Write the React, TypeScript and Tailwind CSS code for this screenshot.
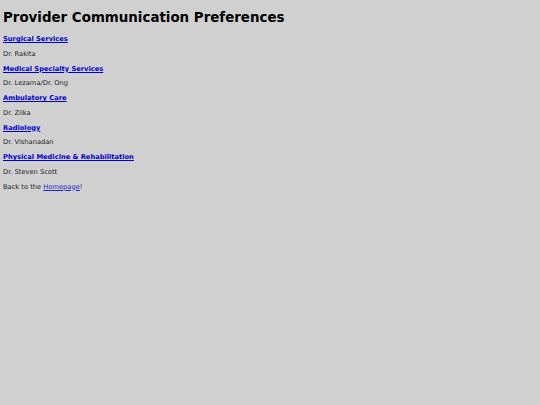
const sections = [
  { name: 'Surgical Services', doc: 'Dr. Rakita' },
  { name: 'Medical Specialty Services', doc: 'Dr. Lezama/Dr. Ong' },
  { name: 'Ambulatory Care', doc: 'Dr. Zilka' },
  { name: 'Radiology', doc: 'Dr. Vishanadan' },
  { name: 'Physical Medicine & Rehabilitation', doc: 'Dr. Steven Scott' },
];

export default function App() {
  return (
    <div className="min-h-[405px] bg-[#d0d0d0] px-[3px] pt-[9px] text-black" style={{ fontFamily: '"DejaVu Sans", Verdana, sans-serif' }}>
      <h1 className="text-[13.4px] font-bold leading-[18px]">Provider Communication Preferences</h1>
      <div className="mt-[5px] flex flex-col text-[6.7px] leading-[14.75px]">
        {sections.map((s) => (
          <div key={s.name} className="contents">
            <a href="#" className="font-bold text-[#0000cc] underline">{s.name}</a>
            <p className="text-[#222]">{s.doc}</p>
          </div>
        ))}
        <p className="text-[#222]">
          Back to the <a href="#" className="text-[#2222cc] underline">Homepage</a>!
        </p>
      </div>
    </div>
  );
}
